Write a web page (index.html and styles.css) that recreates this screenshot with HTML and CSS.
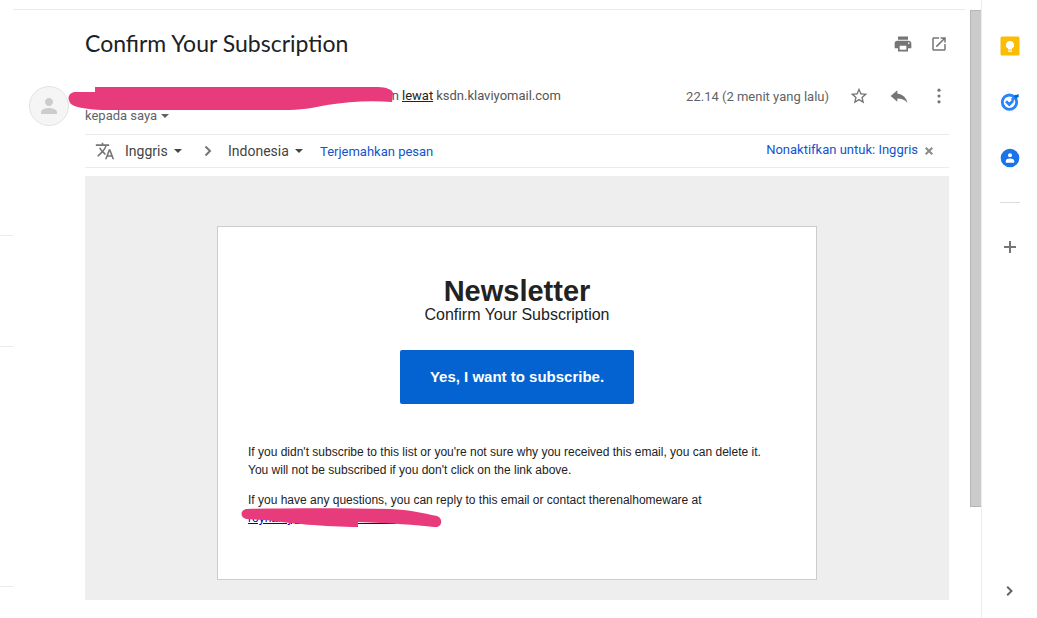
FILE: index.html
```html
<!DOCTYPE html>
<html lang="id">
<head>
    <meta charset="UTF-8">
    <meta name="viewport" content="width=device-width, initial-scale=1.0">
    <title>Confirm Your Subscription</title>
    <link rel="stylesheet" href="styles.css">
</head>
<body>
    <div class="app">
        <div class="rail">
            <div class="rail-item first"></div>
            <div class="rail-item second"></div>
            <div class="rail-item third"></div>
        </div>

        <main class="thread">
            <header class="subject">
                <h1>Confirm Your Subscription</h1>
                <div class="subject-actions">
                    <button class="icon-btn" aria-label="Cetak semua">
                        <svg width="20" height="20" viewBox="0 0 24 24"><path d="M19 8H5c-1.660 0-3 1.340-3 3v6h4v4h12v-4h4v-6c0-1.660-1.340-3-3-3zm-3 11H8v-5h8v5zm3-7c-.55 0-1-.45-1-1s.45-1 1-1 1 .45 1 1-.45 1-1 1zm-1-9H6v4h12V3z"/></svg>
                    </button>
                    <button class="icon-btn" aria-label="Di jendela baru">
                        <svg width="18" height="18" viewBox="0 0 24 24"><path d="M19 19H5V5h7V3H5c-1.110 0-2 .9-2 2v14c0 1.100.89 2 2 2h14c1.100 0 2-.9 2-2v-7h-2v7zM14 3v2h3.590l-9.830 9.830 1.410 1.410L19 6.410V10h2V3h-7z"/></svg>
                    </button>
                </div>
            </header>

            <section class="message">
                <div class="avatar">
                    <svg width="24" height="24" viewBox="0 0 24 24"><path d="M12 12c2.210 0 4-1.790 4-4s-1.790-4-4-4-4 1.790-4 4 1.790 4 4 4zm0 2c-2.670 0-8 1.340-8 4v2h16v-2c0-2.660-5.330-4-8-4z"/></svg>
                </div>

                <div class="message-main">
                    <div class="meta">
                        <div class="sender">
                            <div class="sender-line">
                                <span class="sender-name">n</span>
                                <a href="#" class="via">lewat</a>
                                <span>ksdn.klaviyomail.com</span>
                            </div>
                            <button class="recipient">kepada saya <span class="caret"></span></button>
                            <svg class="mark mark-sender" width="330" height="26" viewBox="0 0 330 26"><path d="M8 6H27V1H310C318 1 325 4 325 7L324 16C300 14 280 16 259 19C245 22 232 24 215 24H42C24 24 8 22 3 18C-2 12 1 6 8 6z"/></svg>
                        </div>
                        <div class="meta-right">
                            <span class="date">22.14 (2 menit yang lalu)</span>
                            <button class="icon-btn" aria-label="Bintangi">
                                <svg width="20" height="20" viewBox="0 0 24 24"><path d="M22 9.240l-7.190-.62L12 2 9.190 8.630 2 9.240l5.460 4.730L5.820 21 12 17.270 18.180 21l-1.630-7.030L22 9.240zM12 15.400l-3.760 2.270 1-4.280-3.320-2.880 4.380-.38L12 6.100l1.710 4.040 4.380.38-3.320 2.880 1 4.280L12 15.400z"/></svg>
                            </button>
                            <button class="icon-btn" aria-label="Balas">
                                <svg width="20" height="20" viewBox="0 0 24 24"><path d="M10 9V5l-8 7 8 7v-4.100c5 0 9 1.600 12 5.100-1-5-4.500-10-12-11z"/></svg>
                            </button>
                            <button class="icon-btn" aria-label="Lainnya">
                                <svg width="20" height="20" viewBox="0 0 24 24"><circle cx="12" cy="5" r="1.900"/><circle cx="12" cy="12" r="1.900"/><circle cx="12" cy="19" r="1.900"/></svg>
                            </button>
                        </div>
                    </div>

                    <div class="translate">
                        <svg class="translate-icon" width="20" height="20" viewBox="0 0 24 24"><path d="M12.870 15.070l-2.540-2.510.03-.03c1.740-1.940 2.980-4.170 3.710-6.530H17V4h-7V2H8v2H1v1.990h11.170C11.500 7.920 10.440 9.750 9 11.350 8.070 10.320 7.300 9.190 6.690 8h-2c.73 1.630 1.730 3.170 2.980 4.560l-5.090 5.020L4 19l5-5 3.110 3.110.76-2.040zM18.500 10h-2L12 22h2l1.120-3h4.750L21 22h2l-4.500-12zm-2.620 7l1.620-4.330L19.120 17h-3.240z"/></svg>
                        <div class="lang">
                            <select aria-label="Bahasa asal"><option>Inggris</option></select>
                            <span class="caret"></span>
                        </div>
                        <svg class="chevron" width="8" height="10" viewBox="0 0 8 10"><path d="M1.500 .5L6 5L1.500 9.500"/></svg>
                        <div class="lang">
                            <select aria-label="Bahasa tujuan"><option>Indonesia</option></select>
                            <span class="caret"></span>
                        </div>
                        <a href="#" class="translate-link">Terjemahkan pesan</a>
                        <div class="translate-off">
                            <a href="#">Nonaktifkan untuk: Inggris</a>
                            <button class="close" aria-label="Tutup">
                                <svg width="8" height="8" viewBox="0 0 8 8"><path d="M.7 .7L7.300 7.300M7.300 .7L.7 7.300"/></svg>
                            </button>
                        </div>
                    </div>

                    <div class="mail">
                        <div class="card">
                            <h2>Newsletter</h2>
                            <p class="tagline">Confirm Your Subscription</p>
                            <button class="confirm">Yes, I want to subscribe.</button>
                            <div class="notes">
                                <p>If you didn't subscribe to this list or you're not sure why you received this email, you can delete it.<br>You will not be subscribed if you don't click on the link above.</p>
                                <div class="contact">
                                    <p>If you have any questions, you can reply to this email or contact therenalhomeware at<br><a href="#">roynaiuy,&nbsp;&nbsp;&nbsp;&nbsp;&nbsp;&nbsp;&nbsp;&nbsp;&nbsp;&nbsp;&nbsp;&nbsp;&nbsp;&nbsp;&nbsp;&nbsp;&nbsp;&nbsp;&nbsp;mo&nbsp;&nbsp;&nbsp;&nbsp;&nbsp;&nbsp;</a></p>
                                    <svg class="mark mark-contact" width="202" height="22" viewBox="0 0 202 22"><path d="M6 1C50 0 100 0 150 1C168 2 182 5 196 8C203 11 201 20 193 19C175 17 150 15 117 14V19C85 19 45 15 25 12L5 11C-2 9 0 1 6 1z"/></svg>
                                </div>
                            </div>
                        </div>
                    </div>
                </div>
            </section>
        </main>

        <div class="scroll"><div class="scroll-thumb"></div></div>

        <aside class="side">
            <button class="icon-btn" aria-label="Keep">
                <svg width="20" height="20" viewBox="0 0 20 20"><rect x=".5" y=".5" width="19" height="19" rx="1.500" fill="#fbbc04"/><path fill="#fff" d="M10 5a4 4 0 0 0-2 7.500V13.500h4V12.500A4 4 0 0 0 10 5zM8 14.500h4v1.300H8z"/></svg>
            </button>
            <button class="icon-btn" aria-label="Tasks">
                <svg width="20" height="20" viewBox="0 0 20 20"><circle cx="9.500" cy="10.200" r="7.200" fill="none" stroke="#2684fc" stroke-width="2.800"/><path d="M6 9.300L9.300 12.500L13 8.800" fill="none" stroke="#2684fc" stroke-width="2.800"/><path d="M12 8.200L16.500 3.500" fill="none" stroke="#2684fc" stroke-width="3.200"/><path d="M13.800 4L18.500 2L18.800 4.800L15.800 7z" fill="#0066da"/></svg>
            </button>
            <button class="icon-btn" aria-label="Kontak">
                <svg width="20" height="20" viewBox="0 0 20 20"><circle cx="10" cy="10" r="9.300" fill="#1a73e8"/><circle cx="10" cy="7.300" r="2" fill="#fff"/><path fill="#fff" d="M10 10.500c-2 0-4.200.8-4.200 2.400V14.700h8.400V12.900c0-1.600-2.200-2.400-4.200-2.400z"/></svg>
            </button>
            <div class="side-line"></div>
            <button class="icon-btn" aria-label="Dapatkan add-on">
                <svg width="20" height="20" viewBox="0 0 20 20"><path d="M9 4h2v5h5v2h-5v5H9v-5H4V9h5z"/></svg>
            </button>
            <button class="icon-btn side-toggle" aria-label="Sembunyikan panel samping">
                <svg width="20" height="20" viewBox="0 0 20 20"><path d="M6.500 6.400L10.100 10l-3.600 3.600L7.900 15l5-5-5-5z"/></svg>
            </button>
        </aside>
    </div>
</body>
</html>
```

FILE: styles.css
```css
* {
    box-sizing: border-box;
}
body {
    margin: 0;
    background: white;
    color: #202124;
    font-family: Roboto, "Liberation Sans", sans-serif;
    font-size: 13px;
}
h1, h2, p {
    margin: 0;
    font-weight: 400;
}
a {
    color: #1155cc;
    text-decoration: none;
}
button, select {
    font-family: inherit;
    border: none;
    background: none;
    padding: 0;
    margin: 0;
    cursor: pointer;
}
svg {
    display: block;
}
.app {
    display: flex;
    min-height: 100vh;
}

/* edge of the message list */
.rail {
    width: 13px;
}
.rail-item {
    border-bottom: 1px solid #ebebeb;
}
.first {
    height: 236px;
}
.second {
    height: 111px;
}
.third {
    height: 240px;
}

.thread {
    flex: 1;
    min-width: 0;
    margin: 9px 5px 0 0;
    border-top: 1px solid #ebebeb;
}
.subject {
    display: flex;
    align-items: center;
    justify-content: space-between;
    height: 68px;
    padding: 0 16px 0 72px;
}
h1 {
    padding-bottom: 2px;
    font-family: Lato, Roboto, sans-serif;
    font-size: 23px;
    line-height: 28px;
}
.subject-actions {
    display: flex;
    gap: 16px;
}
.icon-btn {
    display: flex;
    align-items: center;
    justify-content: center;
    width: 20px;
    height: 20px;
    fill: #757575;
}

.message {
    display: flex;
    gap: 16px;
    padding: 8px 16px 0;
}
.avatar {
    display: flex;
    align-items: center;
    justify-content: center;
    width: 40px;
    height: 40px;
    border: 1px solid #e3e3e3;
    border-radius: 50%;
    background: #f5f5f5;
    fill: #cccccc;
}
.message-main {
    flex: 1;
    min-width: 0;
}
.meta {
    display: flex;
    justify-content: space-between;
    height: 48px;
    color: #555;
}
.sender {
    position: relative;
    line-height: 20px;
}
.sender-line {
    display: flex;
    gap: 3px;
}
.sender-name {
    width: 314px;
    text-align: right;
}
.via {
    color: #222;
    text-decoration: underline;
}
.recipient {
    display: flex;
    align-items: center;
    gap: 4px;
    color: #5f6368;
    font-size: 13px;
    line-height: 20px;
}
.caret {
    border: 4px solid transparent;
    border-top-color: currentColor;
    border-bottom: none;
}
.mark {
    position: absolute;
    fill: #e83b7b;
}
.mark-sender {
    top: 0;
    left: -17px;
}
.meta-right {
    display: flex;
    align-items: center;
    gap: 20px;
    height: 20px;
}
.date {
    color: #5f6368;
}

.translate {
    display: flex;
    align-items: center;
    height: 34px;
    padding: 0 16px 0 10px;
    border-top: 1px solid #ebebeb;
    border-bottom: 1px solid #ebebeb;
    color: #444;
}
.translate-icon {
    fill: #757575;
    margin-right: 10px;
}
.lang {
    display: flex;
    align-items: center;
    gap: 6px;
}
.lang select {
    appearance: none;
    color: #444;
    font-size: 14px;
}
.chevron {
    margin: 0 16px 0 22px;
    fill: none;
    stroke: #757575;
    stroke-width: 2;
}
.translate-link {
    margin-left: 17px;
}
.translate-off {
    display: flex;
    align-items: center;
    gap: 7px;
    margin-left: auto;
    padding-bottom: 4px;
}
.close {
    padding-top: 4px;
}
.close svg {
    fill: none;
    stroke: #8a8a8a;
    stroke-width: 2;
}

.mail {
    margin-top: 8px;
    padding: 50px 16px 20px;
    background: #eeeeee;
    font-family: "Liberation Sans", Arial, sans-serif;
}
.card {
    max-width: 600px;
    margin: 0 auto;
    padding: 50px 30px 52px;
    border: 1px solid #cccccc;
    background: white;
    color: #222;
    text-align: center;
}
h2 {
    font-size: 29px;
    font-weight: 700;
    line-height: 28px;
}
.tagline {
    font-size: 16px;
    line-height: 20px;
}
.confirm {
    margin: 25px 0 39px;
    padding: 0 30px;
    border-radius: 2px;
    background: #0463d0;
    color: white;
    font-size: 15px;
    font-weight: 700;
    line-height: 54px;
}
.notes {
    font-size: 12px;
    line-height: 18px;
    text-align: left;
}
.contact {
    position: relative;
    margin-top: 12px;
}
.contact a {
    color: #0000cc;
    text-decoration: underline;
}
.mark-contact {
    top: 17px;
    left: -7px;
}

.scroll {
    width: 11px;
    padding-top: 10px;
}
.scroll-thumb {
    height: 497px;
    border: 1px solid #b5b5b5;
    border-right: none;
    background: #cbcbcb;
}
.side {
    display: flex;
    flex-direction: column;
    align-items: center;
    gap: 36px;
    width: 56px;
    padding: 36px 0 17px;
    border-left: 1px solid #ededed;
}
.side-line {
    width: 20px;
    height: 1px;
    margin: -2px 0;
    background: #dadce0;
}
.side-toggle {
    margin-top: auto;
    fill: #5f6368;
}
```
